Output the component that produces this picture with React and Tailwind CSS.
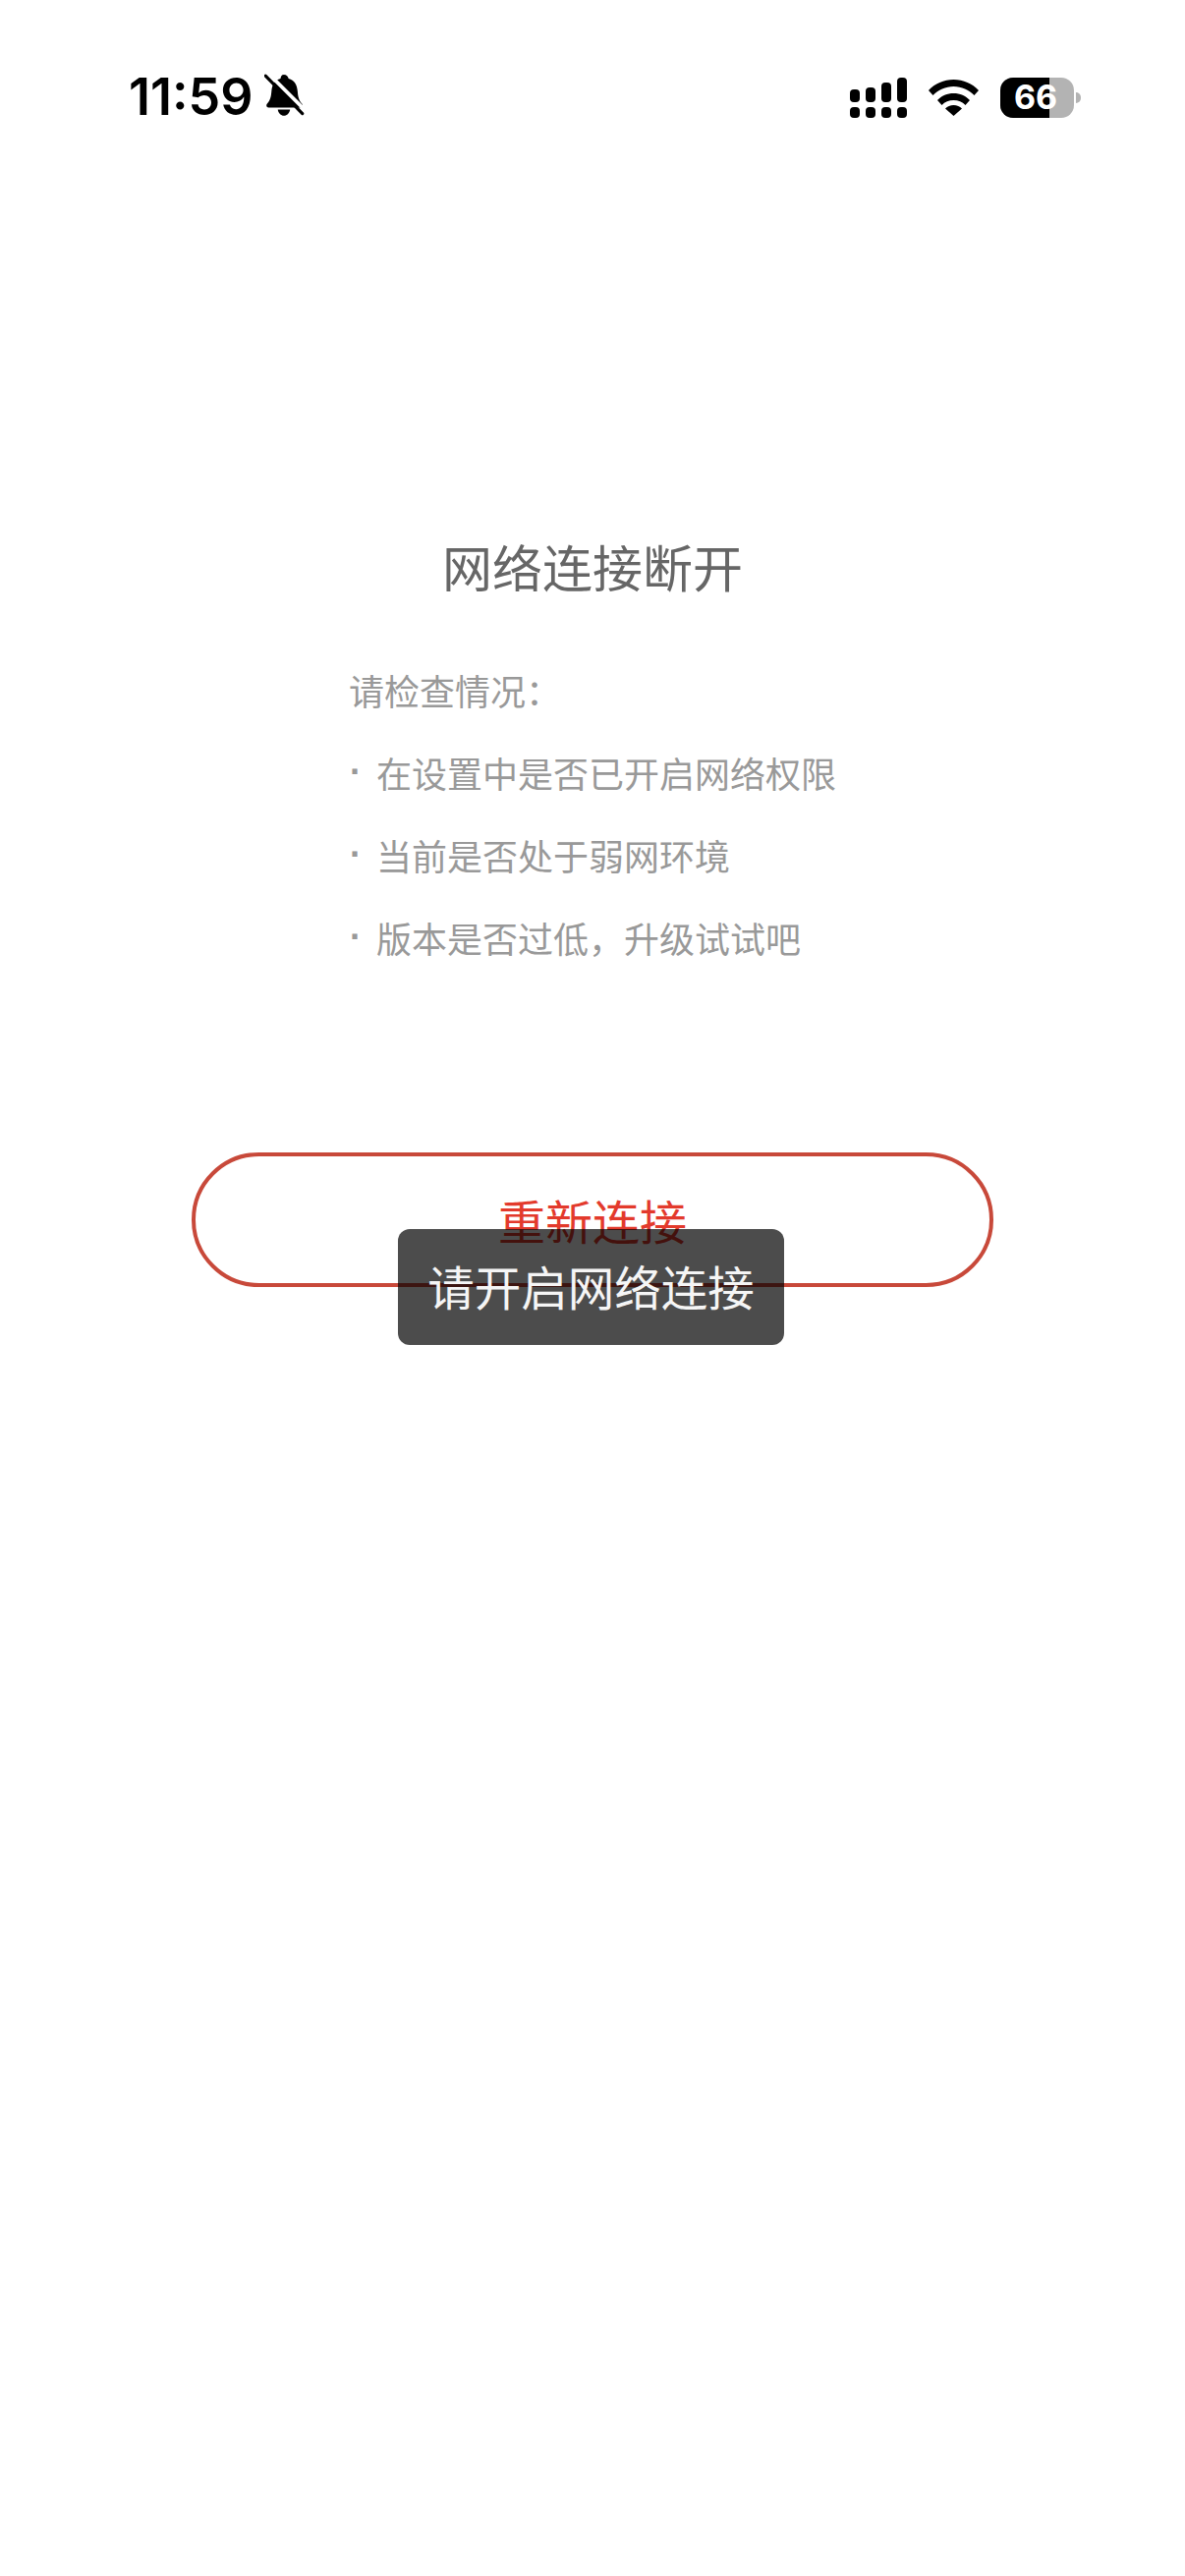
const checks = [
  "在设置中是否已开启网络权限",
  "当前是否处于弱网环境",
  "版本是否过低，升级试试吧",
];

const BellOff = () => (
  <svg width="42" height="48" viewBox="0 0 40 46">
    <path
      d="M19 1c2.500 0 4.200 1.700 4.500 3.800 5.700 1.600 8.300 6 8.800 12.200.4 5.600 1.300 9 4.200 12.300 1.300 1.500.8 3.700-1.300 3.700H4c-2.100 0-2.600-2.200-1.300-3.700 2.900-3.300 3.800-6.700 4.200-12.300.5-6.200 3.100-10.600 8.800-12.200C16 2.700 16.500 1 19 1z"
      fill="#000"
    />
    <path d="M13 35h12c-.5 3.500-3 6-6 6s-5.500-2.500-6-6z" fill="#000" />
    <path d="M3 -1 42 38" stroke="#fff" strokeWidth="3.500" />
    <path d="M1 2 37 39" stroke="#000" strokeWidth="3" strokeLinecap="round" />
  </svg>
);

const Signal = () => (
  <svg width="58" height="41" viewBox="0 0 58 41" fill="#000">
    <rect x="0" y="12" width="10" height="13" rx="4" />
    <rect x="16" y="10" width="10" height="15" rx="4" />
    <rect x="32" y="5" width="10" height="20" rx="4" />
    <rect x="48" y="0" width="10" height="25" rx="4" />
    <rect x="0" y="30" width="10" height="11" rx="4" />
    <rect x="16" y="30" width="10" height="11" rx="4" />
    <rect x="32" y="30" width="10" height="11" rx="4" />
    <rect x="48" y="30" width="10" height="11" rx="4" />
  </svg>
);

const Wifi = () => (
  <svg width="51" height="37" viewBox="0 0 51 37" fill="#000">
    <path d="M0 11C6.500 4 15.500 0 25.500 0S44.500 4 51 11l-4.500 5C41 10.500 33.800 7 25.500 7S10 10.500 4.500 16z" />
    <path d="M9 21c4.200-4.500 10-7 16.500-7S37.800 16.500 42 21l-4.500 5c-3-3.200-7.300-5-12-5s-9 1.800-12 5z" />
    <path d="M17 29.500c2.200-2.200 5.200-3.500 8.500-3.500s6.300 1.300 8.500 3.500L25.500 37z" />
  </svg>
);

const Battery = () => (
  <div className="flex items-center gap-[2px]">
    <div className="relative flex h-[41px] w-[75px] items-center justify-center overflow-hidden rounded-[13px] bg-[#b3b3b3]">
      <div className="absolute inset-y-0 left-0 w-[50px] bg-black" />
      <span className="relative pr-[3px] text-[34px] font-bold leading-none text-white [font-family:Inter,sans-serif]">
        66
      </span>
    </div>
    <div className="h-[11px] w-[5px] rounded-r-full bg-[#b3b3b3]" />
  </div>
);

export default function App() {
  return (
    <div className="relative min-h-[2622px] w-[1206px] bg-white [font-family:'Noto_Sans_CJK_SC',sans-serif]">
      {/* status bar */}
      <div className="flex items-center justify-between pl-[131px] pr-[106px] pt-[75px]">
        <div className="flex items-center gap-[11px]">
          <span className="text-[52px] font-semibold leading-[42px] text-black [font-family:Inter,sans-serif]">
            11:59
          </span>
          <BellOff />
        </div>
        <div className="flex items-center gap-[22px]">
          <Signal />
          <Wifi />
          <Battery />
        </div>
      </div>

      <h1 className="mt-[415px] text-center text-[51px] font-normal leading-[76px] text-[#666666]">
        网络连接断开
      </h1>

      <div className="ml-[355px] mt-[46px] text-[36px] leading-[84px] text-[#999999]">
        <p>请检查情况：</p>
        {checks.map((item) => (
          <p key={item} className="flex">
            <span className="w-[28px] pl-[1px] font-bold [font-family:'Liberation_Sans',sans-serif]">·</span>
            {item}
          </p>
        ))}
      </div>

      <button className="mx-auto mt-[177px] block h-[137px] w-[816px] rounded-full border-[4px] border-[#c8493a] pb-[2px] text-[48px] leading-none text-[#e33a2c]">
        重新连接
      </button>

      {/* toast */}
      <div className="absolute left-[405px] top-[1251px] flex h-[118px] w-[393px] items-center justify-center rounded-[12px] bg-black/70 pb-[2px] text-[47.500px] text-[#f5f5f5]">
        请开启网络连接
      </div>
    </div>
  );
}
